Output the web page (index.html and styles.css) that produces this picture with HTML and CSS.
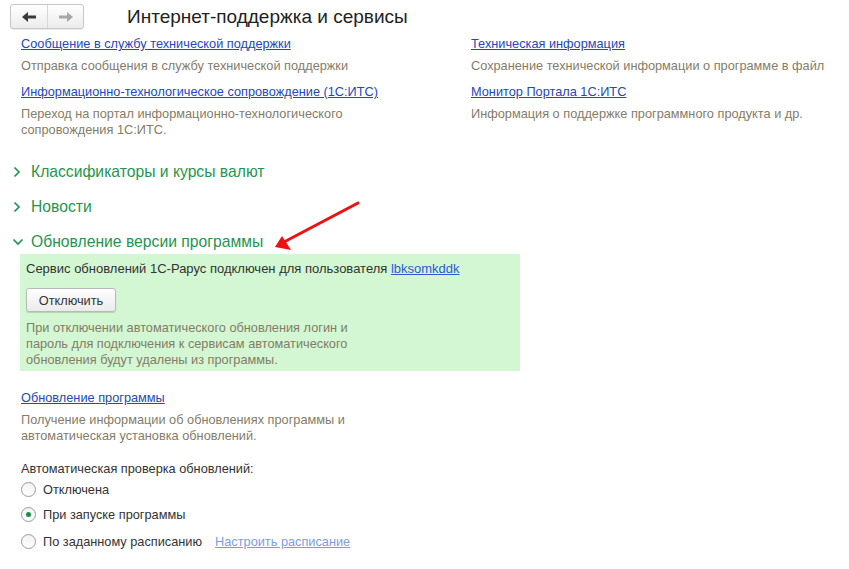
FILE: index.html
```html
<!DOCTYPE html>
<html lang="ru">
<head>
  <meta charset="UTF-8">
  <title>Интернет-поддержка и сервисы</title>
  <link rel="stylesheet" href="styles.css">
</head>
<body>

<div class="toolbar">
  <div class="nav">
    <button class="nav-btn">
      <svg width="14" height="10" viewBox="0 0 14 10"><path d="M0 5 L6 0 L6 3.5 L14 3.5 L14 6.5 L6 6.5 L6 10 Z" fill="#3a3a3a"/></svg>
    </button>
    <button class="nav-btn">
      <svg width="14" height="10" viewBox="0 0 14 10"><path d="M14 5 L8 0 L8 3.5 L0 3.5 L0 6.5 L8 6.5 L8 10 Z" fill="#a8a8a8"/></svg>
    </button>
  </div>
  <div class="title">Интернет-поддержка и сервисы</div>
</div>

<div class="links">
  <div class="link-item">
    <a href="#" class="link">Сообщение в службу технической поддержки</a>
    <div class="desc">Отправка сообщения в службу технической поддержки</div>
  </div>
  <div class="link-item">
    <a href="#" class="link">Техническая информация</a>
    <div class="desc">Сохранение технической информации о программе в файл</div>
  </div>
  <div class="link-item">
    <a href="#" class="link">Информационно-технологическое сопровождение (1С:ИТС)</a>
    <div class="desc">Переход на портал информационно-технологического<br>сопровождения 1С:ИТС.</div>
  </div>
  <div class="link-item">
    <a href="#" class="link">Монитор Портала 1С:ИТС</a>
    <div class="desc">Информация о поддержке программного продукта и др.</div>
  </div>
</div>

<div class="group first">
  <span class="chevron">
    <svg width="8" height="12" viewBox="0 0 8 12"><path d="M1.5 1.5 L6 6 L1.5 10.5" fill="none" stroke="#1e9650" stroke-width="1.7"/></svg>
  </span>
  Классификаторы и курсы валют
</div>
<div class="group">
  <span class="chevron">
    <svg width="8" height="12" viewBox="0 0 8 12"><path d="M1.5 1.5 L6 6 L1.5 10.5" fill="none" stroke="#1e9650" stroke-width="1.7"/></svg>
  </span>
  Новости
</div>
<div class="group">
  <span class="chevron open">
    <svg width="12" height="8" viewBox="0 0 12 8"><path d="M1.5 1.5 L6 6 L10.5 1.5" fill="none" stroke="#1e9650" stroke-width="1.7"/></svg>
  </span>
  Обновление версии программы
</div>

<div class="update-box">
  <div class="status">Сервис обновлений 1С-Рарус подключен для пользователя <a href="#" class="user-link">lbksomkddk</a></div>
  <button class="btn">Отключить</button>
  <div class="desc">При отключении автоматического обновления логин и<br>пароль для подключения к сервисам автоматического<br>обновления будут удалены из программы.</div>
</div>

<div class="update-section">
  <a href="#" class="link">Обновление программы</a>
  <div class="desc">Получение информации об обновлениях программы и<br>автоматическая установка обновлений.</div>

  <div class="label">Автоматическая проверка обновлений:</div>
  <div class="radio-row"><span class="radio"></span>Отключена</div>
  <div class="radio-row"><span class="radio checked"></span>При запуске программы</div>
  <div class="radio-row last"><span class="radio"></span>По заданному расписанию <a href="#" class="schedule-link">Настроить расписание</a></div>
</div>

<svg class="arrow" width="849" height="569" viewBox="0 0 849 569">
  <line x1="358" y1="203" x2="284" y2="242" stroke="#f01010" stroke-width="3" stroke-linecap="round"/>
  <path d="M275 247 L282 236 L291 250 Z" fill="#f01010"/>
</svg>

</body>
</html>
```

FILE: styles.css
```css
body {
    margin: 0;
    padding: 0;
    font-family: "Liberation Sans", Arial, sans-serif;
    font-size: 12.75px;
    color: #333;
    background: #fff;
    position: relative;
    width: 849px;
    height: 569px;
    overflow: hidden;
}

/* top bar */
.toolbar {
    display: flex;
    align-items: center;
    height: 36px;
    padding-left: 10px;
    box-sizing: border-box;
    padding-bottom: 3px;
}

.nav {
    display: flex;
    border: 1px solid #c6c6c6;
    border-radius: 3px;
    background: linear-gradient(#ffffff, #ececec);
    box-shadow: 0 1px 1px rgba(0, 0, 0, 0.08);
}

.nav-btn {
    width: 36px;
    height: 23px;
    border: none;
    background: none;
    padding: 0;
    display: flex;
    align-items: center;
    justify-content: center;
}

.nav-btn + .nav-btn {
    border-left: 1px solid #d6d6d6;
}

.title {
    margin-left: 43px;
    font-size: 19px;
    color: #222;
}

/* link grid */
.links {
    display: grid;
    grid-template-columns: 450px auto;
    padding-left: 21px;
}

.link-item {
    margin-bottom: 10px;
}

.link {
    display: inline-block;
    color: #2448b8;
    line-height: 16px;
    margin-bottom: 6px;
}

.desc {
    color: #857c68;
    line-height: 16px;
}

/* collapsible groups */
.group {
    display: flex;
    align-items: center;
    height: 20px;
    line-height: 20px;
    font-size: 15.7px;
    color: #1e9650;
    margin-top: 15px;
    padding-left: 13px;
}

.group.first {
    margin-top: 14px;
}

.chevron {
    width: 18px;
    display: flex;
    align-items: center;
}

.chevron.open {
    margin-left: -1px;
    width: 19px;
}

/* green status box */
.update-box {
    margin: 2px 0 0 20px;
    width: 500px;
    height: 117px;
    box-sizing: border-box;
    background: #d2f7d2;
    padding: 7px 6px 0;
}

.status {
    font-size: 13px;
    line-height: 16px;
    color: #333;
}

.user-link {
    color: #2a5ad6;
}

.btn {
    display: block;
    margin: 11px 0 8px;
    width: 90px;
    height: 24px;
    border: 1px solid #b9b9b9;
    border-radius: 3px;
    background: linear-gradient(#ffffff, #ebebeb);
    box-shadow: 0 1px 1px rgba(0, 0, 0, 0.15);
    font-family: "Liberation Sans", Arial, sans-serif;
    font-size: 12.75px;
    color: #333;
}

/* update section */
.update-section {
    padding-left: 21px;
    margin-top: 19px;
}

.label {
    margin-top: 17px;
    line-height: 16px;
}

.radio-row {
    display: flex;
    align-items: center;
    height: 25px;
}

.radio-row:first-of-type {
    margin-top: -1px;
}

.radio-row.last {
    margin-top: 2px;
}

.radio {
    width: 13px;
    height: 13px;
    border: 1px solid #9a9a9a;
    border-radius: 50%;
    background: linear-gradient(#f2f2f2, #ffffff);
    margin-right: 7px;
    display: flex;
    align-items: center;
    justify-content: center;
    box-sizing: content-box;
}

.radio.checked::after {
    content: "";
    width: 5px;
    height: 5px;
    border-radius: 50%;
    background: #17904a;
}

.schedule-link {
    margin-left: 13px;
    color: #7b9de0;
}

.arrow {
    position: absolute;
    left: 0;
    top: 0;
    pointer-events: none;
}
```
